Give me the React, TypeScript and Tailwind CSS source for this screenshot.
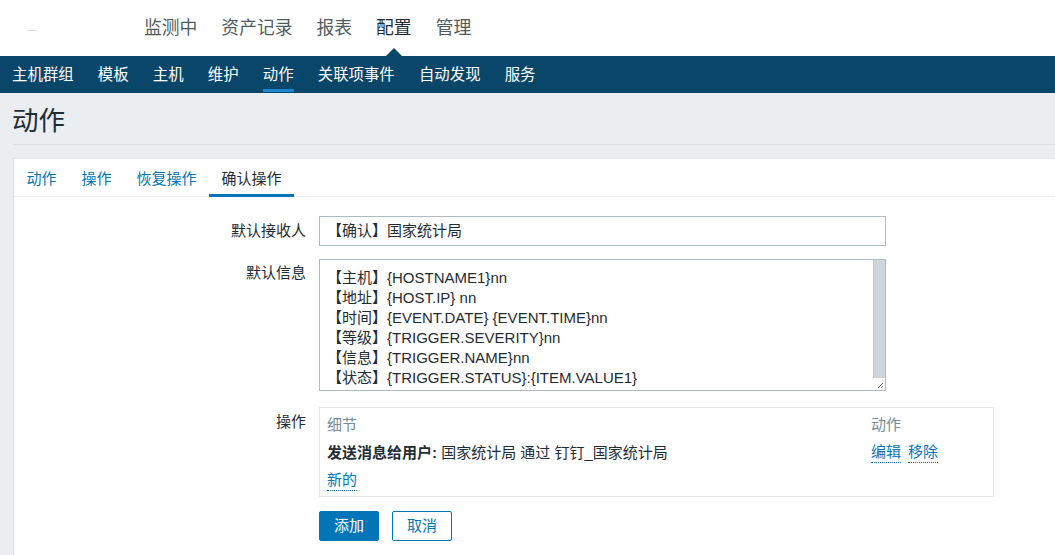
import React from "react";

const topNav = ["监测中", "资产记录", "报表", "配置", "管理"];
const subNav = ["主机群组", "模板", "主机", "维护", "动作", "关联项事件", "自动发现", "服务"];
const tabs = ["动作", "操作", "恢复操作", "确认操作"];

const messageLines = [
  ["【主机】", "{HOSTNAME1}nn"],
  ["【地址】", "{HOST.IP} nn"],
  ["【时间】", "{EVENT.DATE} {EVENT.TIME}nn"],
  ["【等级】", "{TRIGGER.SEVERITY}nn"],
  ["【信息】", "{TRIGGER.NAME}nn"],
  ["【状态】", "{TRIGGER.STATUS}:{ITEM.VALUE1}"],
];

function Header() {
  return (
    <div className="h-[56px] bg-white flex items-center relative">
      <div className="absolute left-[27px] top-[30px] w-[10px] h-[1px] bg-[#bfe6f2]" />
      <div className="flex items-center pl-[132px] pt-[1px]">
        {topNav.map((item) => (
          <div key={item} className="relative px-[12px]">
            <span
              className={
                "text-[17.8px] leading-[24px] " +
                (item === "配置" ? "text-[#1f2c33]" : "text-[#4f5b62]")
              }
            >
              {item}
            </span>
            {item === "配置" && (
              <div className="absolute left-1/2 -translate-x-1/2 top-[32px] w-0 h-0 border-l-[8px] border-r-[8px] border-b-[8px] border-l-transparent border-r-transparent border-b-[#0a466a]" />
            )}
          </div>
        ))}
      </div>
    </div>
  );
}

function SubNav() {
  return (
    <div className="h-[37px] bg-[#0a466a] flex items-stretch">
      {subNav.map((item) => (
        <div key={item} className="px-[12.1px] flex flex-col justify-center relative">
          <span className="text-[15.4px] text-white leading-[20px]">{item}</span>
          {item === "动作" && (
            <div className="absolute left-[12px] right-[12px] bottom-[1px] h-[3px] bg-[#1b87cf]" />
          )}
        </div>
      ))}
    </div>
  );
}

function Link({ children }: { children: React.ReactNode }) {
  return (
    <span className="text-[#0275b8] border-b border-dotted border-[#0275b8] leading-[18px] pb-[1px]">
      {children}
    </span>
  );
}

export default function App() {
  return (
    <div className="w-[1055px] h-[555px] overflow-hidden bg-[#ebeef0] text-[#1f2c33] font-['Liberation_Sans','Noto_Sans_CJK_SC',sans-serif] text-[15px]">
      <Header />
      <SubNav />
      <div className="pl-[13px]">
        <div className="w-[1060px] border-b border-[#dde1e4] pt-[13px] pb-[7px]">
          <h1 className="text-[26.5px] leading-[31px] text-[#1f2c33] -ml-[1px]">动作</h1>
        </div>
        <div className="w-[1060px] mt-[13px] bg-white border border-[#dfe4e7]">
          <div className="h-[38px] flex border-b border-[#ebeef0]">
            {tabs.map((t) => (
              <div key={t} className="px-[12.5px] relative flex items-center">
                <span
                  className={
                    "text-[15px] leading-[20px] pt-[3px] " +
                    (t === "确认操作" ? "text-[#1f2c33]" : "text-[#0275b8]")
                  }
                >
                  {t}
                </span>
                {t === "确认操作" && (
                  <div className="absolute left-0 right-0 -bottom-[1px] h-[3px] bg-[#0275b8]" />
                )}
              </div>
            ))}
          </div>

          <div className="pt-[19px] pb-[20px]">
            <div className="flex">
              <div className="w-[292px] text-right h-[30px] leading-[30px]">默认接收人</div>
              <div className="ml-[13px] w-[567px] h-[30px] border border-[#acbbc2] pl-[7px] flex items-center">
                【确认】国家统计局
              </div>
            </div>

            <div className="flex mt-[13px]">
              <div className="w-[292px] text-right leading-[20px] pt-[4px]">默认信息</div>
              <div className="ml-[13px] w-[567px] h-[132px] border border-[#acbbc2] flex">
                <div className="flex-1 pl-[7px] pt-[8px] leading-[20px]">
                  {messageLines.map(([a, b]) => (
                    <div key={a} className="whitespace-nowrap">
                      {a}
                      {b}
                    </div>
                  ))}
                </div>
                <div className="w-[12px] flex flex-col">
                  <div className="flex-1 bg-[#cdd5db] border-l border-[#bcc8cf]" />
                  <div className="h-[12px] bg-white relative">
                    <svg className="absolute right-[1px] bottom-[1px]" width="8" height="8" viewBox="0 0 8 8">
                      <path d="M7 2 L2 7 M7 5 L5 7" stroke="#777" strokeWidth="1" />
                    </svg>
                  </div>
                </div>
              </div>
            </div>

            <div className="flex mt-[16px]">
              <div className="w-[292px] text-right leading-[20px] pt-[5px]">操作</div>
              <div className="ml-[13px] w-[675px] h-[90px] border border-[#e4e8eb] pl-[7px] pt-[3px]">
                <div className="flex h-[28px] items-center text-[#768d99]">
                  <div className="w-[544px]">细节</div>
                  <div>动作</div>
                </div>
                <div className="flex h-[28px] items-center">
                  <div className="w-[544px] whitespace-nowrap">
                    <span className="font-bold">发送消息给用户:</span> 国家统计局 通过 钉钉_国家统计局
                  </div>
                  <div className="flex gap-[7px]">
                    <Link>编辑</Link>
                    <Link>移除</Link>
                  </div>
                </div>
                <div className="flex h-[28px] items-center">
                  <Link>新的</Link>
                </div>
              </div>
            </div>

            <div className="flex mt-[14px] ml-[305px] gap-[13px]">
              <button className="w-[60px] h-[30px] bg-[#0275b8] text-white rounded-[2px] border border-[#0275b8]">
                添加
              </button>
              <button className="w-[60px] h-[30px] bg-white text-[#0275b8] rounded-[2px] border border-[#0275b8]">
                取消
              </button>
            </div>
          </div>
        </div>
      </div>
    </div>
  );
}
